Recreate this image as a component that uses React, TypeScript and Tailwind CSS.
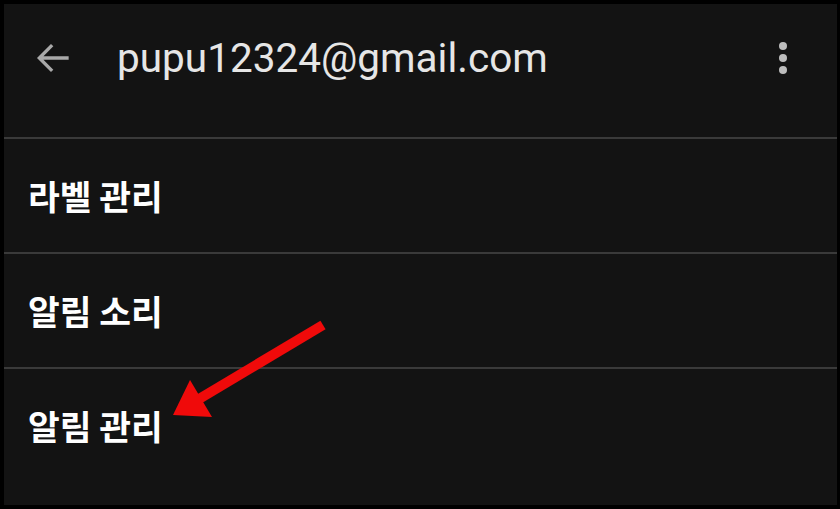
export default function App() {
  const rows = ["라벨 관리", "알림 소리", "알림 관리"];
  return (
    <div className="w-[840px] h-[509px] bg-black pt-[4px] pb-[4px] pl-[4px] pr-[3px]">
      <div className="relative h-full bg-[#131313] flex flex-col">
        <div className="h-[135px] border-b-2 border-[#3a3a3a]">
          <div className="h-[108px] flex items-center pl-[28px] pr-[50px]">
            <svg width="44" height="44" viewBox="0 0 24 24" className="shrink-0">
              <path d="M20 12H5M11 5l-7 7 7 7" fill="none" stroke="#a9a9a9" strokeWidth="1.8" />
            </svg>
            <span className="ml-[41px] text-[40.5px] text-[#e6e6e6] font-['Roboto',sans-serif]">
              pupu12324@gmail.com
            </span>
            <div className="ml-auto flex flex-col gap-[4px]">
              <span className="block w-[8px] h-[8px] rounded-full bg-[#bdbdbd]" />
              <span className="block w-[8px] h-[8px] rounded-full bg-[#bdbdbd]" />
              <span className="block w-[8px] h-[8px] rounded-full bg-[#bdbdbd]" />
            </div>
          </div>
        </div>
        {rows.map((r, i) => (
          <div
            key={r}
            className={
              i < 2
                ? "h-[115px] border-b-2 border-[#3a3a3a] flex items-center pl-[24px]"
                : "h-[113px] flex items-center pl-[24px]"
            }
          >
            <span className="text-[34.5px] font-bold text-white font-['Noto_Sans_CJK_KR',sans-serif]">{r}</span>
          </div>
        ))}
        <svg className="absolute left-0 top-0" width="836" height="501" viewBox="0 0 836 501">
          <line x1="319" y1="321" x2="190" y2="398" stroke="#f00a0a" strokeWidth="10" />
          <polygon points="169,411 186,376 208,413" fill="#f00a0a" />
        </svg>
      </div>
    </div>
  );
}
